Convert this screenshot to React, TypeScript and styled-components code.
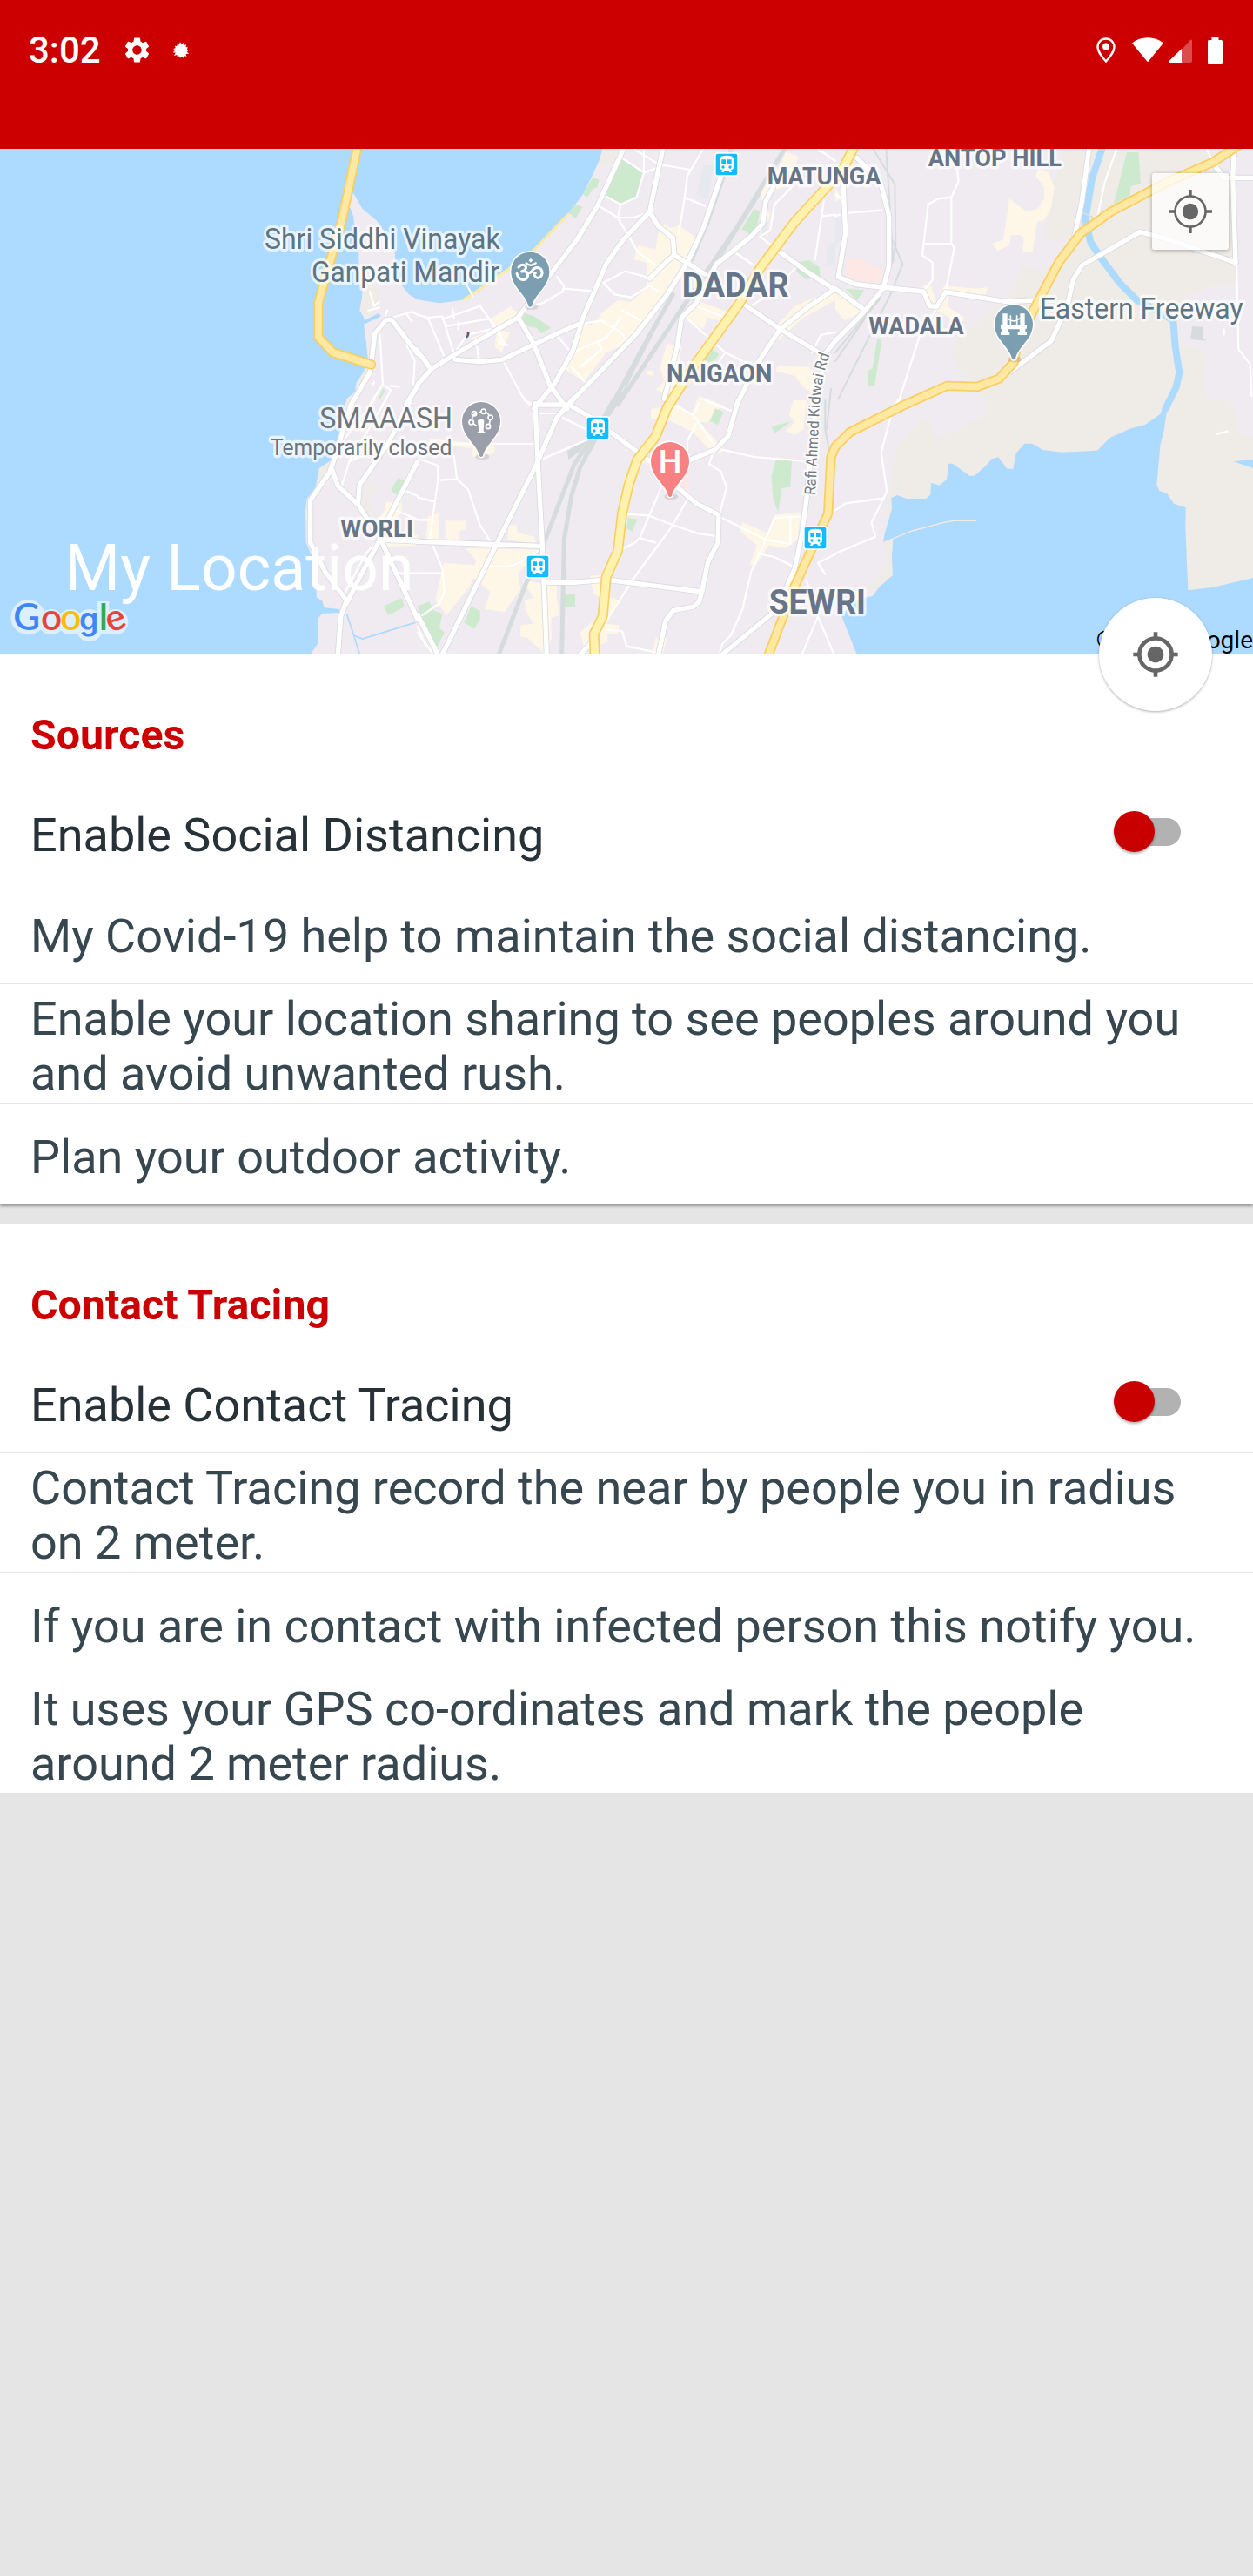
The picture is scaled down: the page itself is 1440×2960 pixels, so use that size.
import React from 'react';
import styled, { createGlobalStyle } from 'styled-components';
import { MdMyLocation, MdSettings } from 'react-icons/md';

const GlobalStyle = createGlobalStyle`
  * { box-sizing: border-box; }
  body {
    margin: 0;
    background: #e5e5e5;
    font-family: Roboto, "Noto Sans", sans-serif;
  }
`;

const Screen = styled.main`
  width: 1440px;
  min-height: 2960px;
  background: #e5e5e5;
`;

const StatusBar = styled.header`
  display: flex;
  justify-content: space-between;
  align-items: flex-start;
  height: 171px;
  padding: 33px 35px 0 33px;
  background: #cc0000;
  color: #fff;
`;

const StatusGroup = styled.div`
  display: flex;
  align-items: center;
  height: 49px;
`;

const Clock = styled.span`
  width: 82px;
  font-size: 42px;
  font-weight: 500;
  line-height: 49px;
  margin-right: 25px;
`;

const GearIcon = styled(MdSettings)`
  width: 35px;
  height: 35px;
  margin-right: 23px;
`;

const StatusGlyph = styled.svg<{ $w: number; $h: number; $gap?: number }>`
  display: block;
  width: ${(p) => p.$w}px;
  height: ${(p) => p.$h}px;
  margin-left: ${(p) => p.$gap ?? 0}px;
`;

const MapPanel = styled.section`
  position: relative;
  height: 581px;
`;

const MapCanvas = styled.svg`
  display: block;
  width: 1440px;
  height: 581px;
`;

const MapTitle = styled.h1`
  position: absolute;
  left: 74px;
  bottom: 56px;
  margin: 0;
  color: #fff;
  font-size: 73.5px;
  font-weight: 400;
  line-height: 86px;
`;

const Copyright = styled.span`
  position: absolute;
  right: 0;
  bottom: 0;
  font-size: 28px;
  line-height: 33px;
  color: #000;
`;

const LocateTile = styled.button`
  position: absolute;
  top: 28px;
  right: 28px;
  display: grid;
  place-items: center;
  width: 88px;
  height: 88px;
  padding: 0;
  border: 0;
  border-radius: 3px;
  background: rgba(255, 255, 255, 0.75);
  box-shadow: 0 1px 5px rgba(0, 0, 0, 0.3);
`;

const LocateFab = styled.button`
  position: absolute;
  right: 47px;
  bottom: -65px;
  display: grid;
  place-items: center;
  width: 130px;
  height: 130px;
  padding: 0;
  border: 0;
  border-radius: 50%;
  background: #fff;
  color: #666;
  box-shadow: 0 1px 3px rgba(0, 0, 0, 0.32);

  svg { width: 56px; height: 56px; }
`;

const Card = styled.section<{ $raised?: boolean }>`
  background: #fff;
  margin-bottom: 23px;
  box-shadow: ${(p) => (p.$raised ? '0 2px 3px rgba(0, 0, 0, 0.36)' : 'none')};
`;

const CardTitle = styled.h2`
  height: 146px;
  margin: 0;
  padding: 64px 35px 0;
  color: #cc0000;
  font-size: 48.3px;
  font-weight: 700;
  line-height: 58px;
`;

const Row = styled.div<{ $divided?: boolean; $strong?: boolean }>`
  display: flex;
  align-items: center;
  justify-content: space-between;
  min-height: ${(p) => (p.$divided ? 117 : 116)}px;
  padding: 8px 35px 2px;
  border-top: ${(p) => (p.$divided ? '1px solid #e4e5e6' : '0')};
  color: ${(p) => (p.$strong ? '#263238' : '#37474f')};
  font-size: 54px;
  line-height: 63px;
`;

const Switch = styled.button`
  display: flex;
  align-items: center;
  width: 70px;
  height: 32px;
  margin: 0 48px 7px 0;
  padding: 0;
  border: 0;
  border-radius: 16px;
  background: #b2b2b2;
`;

const Thumb = styled.span`
  flex: none;
  width: 47px;
  height: 47px;
  margin-left: -7px;
  border-radius: 50%;
  background: #c80000;
  box-shadow: 0 2px 3px rgba(0, 0, 0, 0.3);
`;

/* The map is drawn in six tiles, each 1440 units wide. */
type TileId = 'A' | 'B' | 'C' | 'D' | 'E' | 'F';
type Tiled = Partial<Record<TileId, string[]>>;

const ORIGIN: Record<TileId, [number, number]> = {
  A: [0, 0], B: [1440, 0], C: [2880, 0],
  D: [0, 885], E: [1440, 885], F: [2880, 885],
};

const beige: Tiled = {
  C: ['790,18 1280,18 1345,118 1372,120 1380,480 1300,490 1195,530 1185,690 1280,720 1262,830 1290,900 1260,935 1262,1600 100,1535 180,1450 165,1375 190,1185 210,1055 290,950 330,965 350,1020 520,935 515,880 400,740 410,690 540,570 590,540 645,420 720,440 790,400 800,340 720,330 735,200'],
  F: ['1200,0 1350,0 1380,40 1390,110 1440,130 1440,876 1100,876 1100,300'],
  A: ['1250,490 1300,490 1308,560 1280,600 1240,575', '1265,680 1280,680 1275,790 1230,880 1195,900 1195,870 1228,825 1255,785'],
  B: ['637,18 695,18 670,70 625,70'],
  D: ['1165,110 1140,250 1085,320 1100,235', '1260,280 1300,310 1265,345 1300,400 1260,380 1245,340'],
};

const water: Tiled = {
  A: [
    '0,0 2083,0 2065,60 2040,115 2010,175 1960,240 1840,368 1740,440 1630,515 1590,540 1515,550 1440,538 1410,520 1385,488 1365,460 1362,380 1330,310 1298,265 1250,225 1218,170 1205,215 1218,250 1225,300 1237,370 1237,420 1250,490 1248,530 1240,575 1255,600 1255,630 1262,680 1268,740 1255,785 1228,825 1225,855 1195,880 1165,1015 1150,1085 1100,1120 1088,1185 1058,1225 1053,1265 1055,1375 1085,1445 1092,1565 1110,1575 1118,1600 1170,1605 1170,1617 1110,1620 1098,1635 1098,1720 1070,1761 0,1761',
  ],
  F: [
    '1165,0 1142,40 1133,105 1120,155 1108,292 1117,312 1143,320 1168,357 1208,370 1207,440 1216,655 1300,645 1440,612 1440,876 74,876 22,745 60,690 128,675 150,645 198,603 195,540 199,480 165,490 170,460 195,375 193,337 213,327 245,339 313,339 328,325 330,285 358,293 384,273 391,218 405,218 462,260 480,260 522,223 538,202 562,196 592,236 613,236 623,182 652,149 680,150 715,171 780,179 903,173 948,128 1015,98 1068,84 1120,48 1140,0',
    '1373,211 1440,203 1440,234',
  ],
};

const commerce: Tiled = {
  B: [
    '850,275 870,290 900,282 955,320 950,350 930,400 900,450 880,510 830,550 720,690 650,720 575,820 510,780 550,700 570,620 600,625 640,580 690,540 735,545 790,500 790,410 745,400 760,350 820,365 830,300',
    '250,605 320,560 350,590 330,620 220,680 180,700 190,670 260,640',
    '275,640 318,650 290,720 265,700',
    '1270,30 1315,45 1290,90 1260,150 1200,170 1215,205 1180,190 1200,130 1225,125',
    '960,540 1095,590 1080,620 1000,600 985,640 920,600',
    '860,690 910,700 885,870 820,850 850,820 835,770',
    '1240,765 1350,770 1380,800 1375,870 1330,840 1300,800 1235,785',
    '1300,560 1440,500 1440,540 1330,600 1240,680 1225,640',
    '1200,235 1215,240 1205,280 1185,270',
    '790,745 800,750 795,765 785,760', '790,780 815,785 808,800 788,795',
    '970,870 1050,900 1000,960 930,960',
  ],
  C: [
    '600,190 660,235 695,225 720,190 720,150 690,110 700,85 735,100 755,150 745,220 720,265 695,270 680,375 645,370 650,325 635,315 605,315 600,350 560,370 540,345 580,330',
    '300,490 330,490 350,550 375,490 490,500 525,495 520,520 390,515 385,560 445,600 430,620 350,575 320,560',
    '0,510 110,575 30,610 0,570', '0,150 20,190 0,200',
  ],
  E: [
    '95,415 168,415 168,445 145,450 145,480 95,478', '35,400 75,390 75,480 30,480',
    '165,510 430,515 400,560 370,570 345,600 355,650 300,730 230,720 250,660 190,610 200,550',
    '360,620 480,640 480,680 490,740 460,750 462,820 440,876 380,820 355,815 355,775 400,770 370,720 370,690 400,680',
    '90,560 210,570 180,640 100,740 60,690',
    '40,132 265,155 265,182 190,195 190,165 40,150',
    '315,430 340,430 345,455 400,470 410,495 310,480',
    '595,605 660,600 665,680 700,690 650,770 695,775 690,805 655,805 655,835 575,860 560,800 625,745 630,680 605,665',
    '1120,420 1210,460 1230,395 1320,385 1310,480 1270,510 1210,500 1165,570 1145,565 1170,500 1110,450',
    '805,30 900,15 960,60 1055,170 1040,185 1010,175 950,110 860,65 805,65',
    '1295,0 1340,0 1330,100 1300,120 1270,105 1300,75 1280,50',
    '750,180 810,200 800,225 760,205', '820,820 860,820 845,876 810,876',
  ],
  D: ['1330,350 1385,350 1385,390 1355,410 1305,410 1325,380', '1320,470 1440,465 1440,500 1320,505'],
};

const parks: Tiled = {
  B: [
    '705,55 780,100 755,185 700,210 645,180', '605,115 625,125 620,150 605,155 585,185 570,175',
    '545,208 568,220 545,258 522,240', '370,585 400,595 460,635 425,655 410,635 380,630 358,605',
    '1160,225 1180,235 1170,285 1145,313 1117,295', '1315,408 1350,402 1385,425 1388,460 1340,468 1305,440',
    '1005,705 1040,725 1015,760 985,745',
  ],
  C: [
    '1005,30 1045,30 1053,138 1018,148 1015,180 960,208', '35,500 100,505 75,540',
    '145,670 160,680 135,835 112,838 115,780 128,775',
  ],
  A: ['1320,845 1330,850 1308,885 1303,880'],
  D: ['1373,266 1398,280 1372,326 1347,312', '1322,710 1385,681 1395,712 1340,741'],
  E: [
    '0,710 40,693 55,725 85,735 75,785 92,800 68,850 20,780', '185,710 215,725 215,755 195,788 160,765',
    '507,670 543,668 543,710 507,712', '725,405 757,410 740,452 720,442', '1025,28 1055,40 1035,85 1008,72',
    '1235,205 1290,208 1285,300 1255,303 1243,385 1225,340 1220,260', '1220,90 1290,72 1230,113',
  ],
};

const clinics: Tiled = {
  C: ['40,393 100,400 105,415 165,430 165,470 135,480 35,465'],
  E: ['880,200 935,230 935,310 890,300'],
};

const blocks: Tiled = {
  B: ['985,75 1020,75 1000,195 962,175', '1410,350 1440,340 1440,420 1410,420', '1185,260 1210,270 1200,310 1180,300'],
  C: ['0,255 20,255 20,330 0,350'],
};

const yards: Tiled = {
  C: ['1230,630 1268,632 1268,670 1280,680 1225,675'],
  E: ['515,175 590,130 560,175 520,205'],
};

const rails: Tiled = {
  B: ['1265,18 1100,290 990,450 850,660 690,900', '1080,18 1055,110 1000,270 945,400', '880,520 800,660 670,900'],
  E: ['705,-20 600,130 540,220 440,480 370,640 280,876', '675,0 590,150', '620,120 560,230 530,330 505,480 497,876'],
};

const sidings: Tiled = {
  B: ['870,540 740,790 690,900', '1180,175 950,540'],
  C: ['130,18 205,140 208,350 170,500 90,620 0,750', '175,18 195,330 232,415 190,520 80,740 10,880', '180,200 200,400 150,540 0,720'],
  E: ['1405,0 1405,100 1420,180', '1400,390 1310,620', '590,150 540,290', '1425,-40 1410,100'],
};

const lanes: Tiled = {
  A: [
    '1275,510 1290,560 1308,545', '1270,575 1308,565', '1310,660 1320,830 1348,850 1320,900', '1335,575 1325,610',
    '1350,600 1420,580 1440,590', '1400,585 1420,612', '1400,690 1430,750 1425,830', '1320,830 1275,900', '1345,835 1375,838', '1285,830 1290,822',
  ],
  B: [
    '705,50 780,100 850,75 940,90', '780,18 780,100 755,185 700,210 645,180', '745,18 830,70', '625,215 690,255 745,255 800,235',
    '700,210 690,255 740,340 760,375 850,440', '985,18 960,60 930,110 920,190 900,310', '920,185 990,215',
    '640,480 715,440 790,460', '640,480 680,520 735,530 800,490 830,510', '480,460 505,490 500,510 430,550 390,560',
    '505,500 600,508', '160,470 190,525', '85,605 215,560 265,630 300,690', '0,590 35,600 85,595 130,740', '35,600 90,730',
    '95,630 240,605', '120,570 125,600', '480,660 520,710', '570,620 635,610 700,650 730,690', '705,575 770,610',
    '700,600 650,670 545,715', '620,680 635,710 560,770', '205,700 210,740', '285,630 285,690 310,695', '290,740 360,870 385,900',
    '1230,210 1310,130', '1215,300 1180,320 1245,370', '1230,210 1215,300', '1395,250 1440,245', '1400,200 1370,400',
    '1100,380 1160,420', '1300,430 1240,500 1150,560', '925,600 1060,720 1140,760', '1060,720 1020,780', '960,560 1060,600',
    '135,710 170,660 250,640', '530,770 575,820', '1440,650 1390,660 1360,720', '140,615 140,640', '1380,18 1440,60',
  ],
  C: [
    '420,90 425,130 400,185 355,190 320,210 300,385 335,410 335,470 305,505', '400,185 400,345 410,360 380,510', '305,345 400,345',
    '970,18 930,130 905,245', '1383,410 1390,710 1430,760 1435,870', '345,575 290,665 215,900', '0,250 30,240 160,230', '0,175 20,190',
    '1280,18 1300,60', '1340,640 1340,658',
  ],
  D: [
    '1205,210 1180,290', '1395,310 1440,330', '1365,380 1440,410', '1300,485 1260,530 1180,680', '1375,596 1440,596',
    '1330,0 1205,210', '1290,0 1190,130', '1205,210 1255,190',
  ],
  E: [
    '435,200 610,125', '120,150 405,150', '125,190 135,270 175,310 215,430 250,485', '70,225 70,275 135,272', '0,200 70,225',
    '70,275 42,475 85,580 92,660 75,700 10,745', '0,335 55,348', '0,412 45,412', '0,596 80,596', '425,515 350,560 310,573 250,572',
    '415,45 480,45', '720,392 795,397 880,430 970,460 1025,467', '840,300 765,475 820,490', '705,512 750,490 765,475',
    '925,350 880,430 740,620 690,700 655,750', '1038,400 1200,480 1285,495 1285,400', '1200,480 1230,405 1320,400',
    '1200,480 1150,590 1120,720 1080,810 1050,840 1040,876', '1180,530 1230,540 1290,570', '650,790 705,795 720,848 830,870',
    '880,15 950,50 1030,165', '990,0 1080,35', '950,50 970,10', '960,80 930,140 930,200', '1050,170 1160,195 1340,210',
    '1020,175 1005,220 1045,245 1065,300 1040,395', '500,60 580,100', '1440,530 1380,560 1405,600', '1340,620 1380,745 1325,876',
    '1380,745 1435,876', '0,800 50,870', '370,0 405,20', '0,780 30,850',
  ],
  F: ['0,380 35,355 165,338', '215,0 190,60 158,180 178,315 125,420 138,470 0,528', '1317,116 1352,107'],
};

const streets: Tiled = {
  A: ['1440,725 1350,607 1332,607 1292,655 1280,760 1275,790 1210,900', '1440,835 1400,900'],
  B: [
    '710,18 620,215 550,330 435,480 345,600 190,690 50,775 0,830', '-5,710 45,775', '845,18 800,235 710,330 650,415 570,600 535,715 470,830 400,915',
    '130,745 215,752 290,745 480,655 560,620', '350,605 400,690 455,830 515,915', '1050,100 985,290 930,410 860,520 750,660 515,905',
    '800,235 830,285 880,325 885,385 935,415 990,450', '885,385 860,405 800,465', '1225,150 1200,200 1190,275 1150,320 1030,415 960,550 910,600 895,700 850,880',
    '1240,370 1265,385 1340,440 1440,505', '1120,550 1250,640 1400,730', '1440,500 1350,560 1250,640 1170,760 1100,900', '1440,680 1400,730',
  ],
  C: [
    '25,90 35,310 10,460 70,485 160,495 305,510 325,560 350,562 380,512 590,545 690,540', '75,50 155,130 185,250 185,420 165,500 90,590 0,680',
    '0,500 95,570', '875,18 850,200 825,320', '605,785 745,680 800,560 820,470 850,420 1050,305 1130,325 1380,410',
    '1375,18 1370,120 1380,410', '1440,118 1340,118 1300,65',
  ],
  D: [
    '1210,15 1150,210 1135,250 1070,345 1070,490 1120,590 1195,690 1175,745 1165,876', '1415,0 1340,145 1265,255 1240,290 1235,350',
    '1145,240 1165,295 1235,360 1310,475', '1310,480 1245,600 1195,700', '1315,485 1440,755', '1310,480 1440,486', '1440,210 1330,425',
  ],
  E: [
    '0,740 70,876', '0,487 420,502', '85,876 270,500 410,220 480,60 540,-10', '405,15 520,15 600,60 800,210',
    '405,10 415,230 430,500 435,620 445,876', '1105,0 1070,125 1025,170 940,205', '890,295 960,355 1038,395 1035,490 1000,560 980,660 970,695 950,712 880,725 855,760 830,876',
    '435,628 540,628 650,618 980,660', '1050,876 1240,720 1300,580 1325,460 1342,330 1375,0 1400,-120', '560,876 600,835',
  ],
};

const highways: Tiled = {
  A: ['1235,0 1180,260 1120,470 1098,548 1098,668 1148,720 1280,762'],
  C: ['1400,0 1300,65 1150,130 950,235 845,310 770,410 680,580 625,700 615,755 565,810 490,838 385,835 240,900 50,995 0,1045 -15,1080 -25,1275 -140,1525 -230,1761'],
};

const arterial: Tiled = {
  B: ['1510,0 1465,90 1300,270 1180,430 1110,550 950,770 860,910 820,1010 757,1090 728,1175 705,1275 690,1405 678,1430 650,1495 638,1630 608,1690 611,1761'],
};

const tileGroups = (data: Tiled, draw: (points: string, key: number) => React.ReactNode) =>
  (Object.keys(data) as TileId[]).map((id) => (
    <g key={id} transform={`translate(${ORIGIN[id][0]} ${ORIGIN[id][1]})`}>{data[id]!.map(draw)}</g>
  ));

const Areas = ({ data, fill }: { data: Tiled; fill: string }) => (
  <g fill={fill}>{tileGroups(data, (p, i) => <polygon key={i} points={p} />)}</g>
);

const Lines = ({ data, color, width }: { data: Tiled; color: string; width: number }) => (
  <g fill="none" stroke={color} strokeWidth={width} strokeLinejoin="round" strokeLinecap="round">
    {tileGroups(data, (p, i) => <polyline key={i} points={p} />)}
  </g>
);

interface LabelProps {
  x: number; y: number; size: number; length: number; color?: string; weight?: number; children: string;
}

const Label = ({ x, y, size, length, color = '#667587', weight = 700, children }: LabelProps) => (
  <text
    x={x} y={y} fontSize={size} fontWeight={weight} textLength={length} lengthAdjust="spacingAndGlyphs"
    fill={color} stroke="#fff" strokeOpacity={0.7} strokeWidth={20} strokeLinejoin="round" paintOrder="stroke"
  >
    {children}
  </text>
);

const Pin = ({ x, y, color, children }: { x: number; y: number; color: string; children: React.ReactNode }) => (
  <g transform={`translate(${x} ${y})`}>
    <ellipse cx="4" cy="122" rx="24" ry="11" fill="#000" opacity="0.1" />
    <path
      d="M-6 120C-14 78-66 55-66 0A66 66 0 1 1 66 0C66 55 14 78 6 120Q0 126-6 120Z"
      fill={color} stroke="#fff" strokeWidth="9" paintOrder="stroke"
    />
    {children}
  </g>
);

const Station = ({ x, y }: { x: number; y: number }) => (
  <g transform={`translate(${x} ${y})`}>
    <rect x="-41" y="-41" width="82" height="82" rx="9" fill="#fff" />
    <rect x="-37" y="-37" width="74" height="74" rx="6" fill="#12bdff" />
    <path d="M-24-18Q-24-31 0-31Q24-31 24-18V10Q24 17 15 19L18 27H10L6 21H-6L-10 27H-18L-15 19Q-24 17-24 10Z" fill="#fff" />
    <path d="M-17-17H-3V-3H-17ZM3-17H17V-3H3Z" fill="#12bdff" />
    <circle cx="-12" cy="9" r="5" fill="#12bdff" /><circle cx="12" cy="9" r="5" fill="#12bdff" />
  </g>
);

const GoogleLogo = () => (
  <g fontFamily="Lato, sans-serif" fontSize="127" fontWeight="600">
    <g fill="#dceffe">
      <circle cx="97" cy="1633" r="60" />
      <circle cx="176" cy="1649" r="44" />
      <circle cx="243" cy="1649" r="44" />
      <circle cx="308" cy="1649" r="44" />
      <circle cx="308" cy="1673" r="44" />
      <rect x="333" y="1578" width="43" height="113" />
      <circle cx="398" cy="1649" r="44" />
    </g>
    <text y="1677">
      <tspan x="46" fill="#4285f4">G</tspan>
      <tspan x="141" fill="#ea4335">o</tspan>
      <tspan x="208" fill="#fbbc05">o</tspan>
      <tspan x="273" fill="#4285f4" fontFamily="Inter, sans-serif" fontSize="107">g</tspan>
      <tspan x="341" fill="#34a853">l</tspan>
    </text>
    <text x="367" y="1678" fill="#ea4335" transform="rotate(-20 398 1649)">e</text>
  </g>
);

const CityMap = () => (
  <MapCanvas viewBox="0 18 4320 1743" fontFamily="Roboto, sans-serif">
    <rect width="4320" height="1780" fill="#f0ebf0" />
    <Areas data={beige} fill="#efebe6" />
    <Areas data={water} fill="#addaff" />
    <Areas data={commerce} fill="#fef6e6" />
    <Areas data={parks} fill="#cdeace" />
    <Areas data={clinics} fill="#fde8e6" />
    <Areas data={blocks} fill="#e6eaef" />
    <Areas data={yards} fill="#d6dcde" />
    <g fill="none" stroke="#addaff">
      <polyline strokeWidth="24" points="3805,0 3765,120 3742,260 3760,340 3800,400 3860,480 3920,540 3990,575 4045,610 4052,700 4066,790 4055,840 4015,920" />
      <polyline strokeWidth="5" points="1195,1620 1220,1695 1240,1761" />
      <polyline strokeWidth="5" points="1220,1695 1250,1707 1432,1651" />
      <path strokeWidth="13" d="M1254 617L1310 590" />
    </g>
    <polyline fill="none" stroke="#ffeb9f" strokeWidth="9" points="1960,242 1840,368 1740,442 1630,518 1595,540" />
    <polyline fill="none" stroke="#efebe6" strokeWidth="4" points="3045,1375 3145,1335 3250,1307 3295,1299 3367,1300" />
    <path d="M3735 237L3770 257" stroke="#d6dcde" strokeWidth="6" />
    <Lines data={rails} color="#d6dcde" width={15} />
    <Lines data={sidings} color="#d6dcde" width={6} />
    <Lines data={lanes} color="#fff" width={6.5} />
    <Lines data={streets} color="#d9dae2" width={21} />
    <Lines data={streets} color="#fff" width={16} />
    <Lines data={highways} color="#f9cf62" width={34} />
    <Lines data={highways} color="#ffe8a2" width={23} />
    <Lines data={arterial} color="#f9cf62" width={36} />
    <Lines data={arterial} color="#fff2af" width={26} />

    <Station x={2505} y={72} />
    <Station x={2061} y={981} />
    <Station x={1854} y={1458} />
    <Station x={2811} y={1359} />

    <Label x={912} y={362} size={100} length={812} weight={400} color="#5d7582">Shri Siddhi Vinayak</Label>
    <Label x={1074} y={476} size={100} length={648} weight={400} color="#5d7582">Ganpati Mandir</Label>
    <Label x={3584} y={602} size={98} length={702} weight={400} color="#5d7582">Eastern Freeway</Label>
    <Label x={1102} y={981} size={100} length={458} weight={400} color="#6f767b">SMAAASH</Label>
    <Label x={933} y={1075} size={80} length={625} weight={400} color="#6f767b">Temporarily closed</Label>
    <Label x={3200} y={77} size={85} length={460}>ANTOP HILL</Label>
    <Label x={2645} y={140} size={85} length={392}>MATUNGA</Label>
    <Label x={2351} y={527} size={114} length={369}>DADAR</Label>
    <Label x={2298} y={822} size={86} length={364}>NAIGAON</Label>
    <Label x={2995} y={657} size={85} length={328}>WADALA</Label>
    <Label x={1174} y={1355} size={85} length={251}>WORLI</Label>
    <Label x={2651} y={1620} size={114} length={334}>SEWRI</Label>
    <text x="1604" y="658" fontSize="90" fill="#4b5f6b">,</text>

    <path id="kidwai-road" d="M2811 1212L2826 905Q2832 800 2866 715" fill="none" />
    <text
      fontSize="53" fill="#747a80" stroke="#fff" strokeOpacity="0.75" strokeWidth="14" strokeLinejoin="round"
      paintOrder="stroke"
    >
      <textPath href="#kidwai-road" textLength="488" lengthAdjust="spacingAndGlyphs">Rafi Ahmed Kidwai Rd</textPath>
    </text>

    <Pin x={1828} y={440} color="#7b9eb0">
      <g fill="none" stroke="#fff" strokeWidth="9" strokeLinecap="round">
        <path d="M-40-14Q-30-26-19-20Q-8-12-22-2Q-32 2-28 1Q-6-2-8 15Q-12 33-29 29Q-42 24-46 8" />
        <path d="M-10 4Q2 10 10-6Q24-20 38-6Q46 8 35 20Q22 28 15 14Q12 7 18 6" />
        <path d="M-14-28Q2-14 19-28" strokeWidth="7" />
      </g>
      <path d="M2-44L9-37L2-30L-5-37Z" fill="#fff" />
    </Pin>
    <Pin x={3495} y={622} color="#7b9eb0">
      <path
        d="M-38-36H-22V4H22V-36H38V4H45V16H40V26H45V38H14V26H20V18H-20V26H-14V38H-45V26H-40V16H-45V4H-38Z"
        fill="#fff"
      />
      <path d="M-22-20Q0 0 22-20M-11-30V4M11-30V4" fill="none" stroke="#fff" strokeWidth="5" />
    </Pin>
    <Pin x={1659} y={957} color="#9a9fa9">
      <g fill="none" stroke="#fff" strokeWidth="5">
        {[[-34, 4], [-24, -26], [8, -34], [32, -13], [24, 18]].map(([cx, cy]) => <circle key={cx} cx={cx} cy={cy} r="8" />)}
        <path d="M-29-20L-16-30M-6-31L0-33M17-31L27-22M-32-5L-29-17M31-5L28 10M-26 9L-16 16" />
      </g>
      <path d="M-12-2Q0-14 10-2L8 34Q12 39 22 42H-22Q-10 39-8 34Z" fill="#fff" />
    </Pin>
    <Pin x={2310} y={1095} color="#f88181">
      <text textAnchor="middle" y="39" fontSize="113" fontWeight="500" fill="#fff">H</text>
    </Pin>

    <GoogleLogo />
  </MapCanvas>
);

const SPLAT = Array.from({ length: 30 }, (_, i) => {
  const r = i % 2 ? 6.8 : 8.4 + ((i * 7) % 5) * 0.4;
  const a = (i / 30) * Math.PI * 2;
  return `${(10 + r * Math.cos(a)).toFixed(1)},${(10 + r * Math.sin(a)).toFixed(1)}`;
}).join(' ');

interface Section { title: string; toggle: string; firstDivided: boolean; notes: string[]; }

const SECTIONS: Section[] = [
  {
    title: 'Sources',
    toggle: 'Enable Social Distancing',
    firstDivided: false,
    notes: [
      'My Covid-19 help to maintain the social distancing.',
      'Enable your location sharing to see peoples around you and avoid unwanted rush.',
      'Plan your outdoor activity.',
    ],
  },
  {
    title: 'Contact Tracing',
    toggle: 'Enable Contact Tracing',
    firstDivided: true,
    notes: [
      'Contact Tracing record the near by people you in radius on 2 meter.',
      'If you are in contact with infected person this notify you.',
      'It uses your GPS co-ordinates and mark the people around 2 meter radius.',
    ],
  },
];

export default function App() {
  return (
    <>
      <GlobalStyle />
      <Screen>
        <StatusBar>
          <StatusGroup>
            <Clock>3:02</Clock>
            <GearIcon />
            <StatusGlyph $w={20} $h={20} viewBox="0 0 20 20"><polygon points={SPLAT} fill="#fff" /></StatusGlyph>
          </StatusGroup>
          <StatusGroup>
            <StatusGlyph $w={22} $h={30} viewBox="0 0 22 30">
              <path d="M11 1.5C5.5 1.5 1.5 5.6 1.5 11C1.5 17.5 11 27.5 11 27.5S20.5 17.5 20.5 11C20.5 5.6 16.5 1.5 11 1.5Z" fill="none" stroke="#fff" strokeWidth="2.4" />
              <circle cx="11" cy="10.5" r="3.9" fill="#fff" />
            </StatusGlyph>
            <StatusGlyph $w={36} $h={30} $gap={19} viewBox="0 0 36 30">
              <path d="M0 6.5C10-1.8 26-1.8 36 6.5L19 27.3Q18 28.5 17 27.3Z" fill="#fff" />
            </StatusGlyph>
            <StatusGlyph $w={27} $h={30} $gap={6} viewBox="0 0 27 30">
              <path d="M15 14L25 3Q27 1.5 27 4V27Q27 29 25 29H15Z" fill="#fff" opacity="0.3" />
              <path d="M15 13V29H1.2Q-.7 28.6.6 27Z" fill="#fff" />
            </StatusGlyph>
            <StatusGlyph $w={17} $h={30} $gap={18} viewBox="0 0 17 30">
              <path d="M4.5 0H12.5V3H15.5Q17 3 17 4.5V28.5Q17 30 15.5 30H1.5Q0 30 0 28.5V4.5Q0 3 1.5 3H4.5Z" fill="#fff" />
            </StatusGlyph>
          </StatusGroup>
        </StatusBar>

        <MapPanel>
          <CityMap />
          <MapTitle>My Location</MapTitle>
          <Copyright>©2020 Google</Copyright>
          <LocateTile aria-label="Center map">
            <svg width="50" height="50" viewBox="0 0 50 50" fill="none" stroke="#666" strokeWidth="2.6">
              <circle cx="25" cy="25" r="17.5" />
              <circle cx="25" cy="25" r="9.2" fill="#666" stroke="none" />
              <path d="M25 0V7.5M25 42.5V50M0 25H7.5M42.5 25H50" strokeWidth="3.4" />
            </svg>
          </LocateTile>
          <LocateFab aria-label="My location"><MdMyLocation /></LocateFab>
        </MapPanel>

        {SECTIONS.map((section, index) => (
          <Card key={section.title} $raised={index === 0}>
            <CardTitle>{section.title}</CardTitle>
            <Row $strong>
              {section.toggle}
              <Switch role="switch" aria-checked={false} aria-label={section.toggle}><Thumb /></Switch>
            </Row>
            {section.notes.map((note, i) => (
              <Row key={note} $divided={i > 0 || section.firstDivided}>{note}</Row>
            ))}
          </Card>
        ))}
      </Screen>
    </>
  );
}
